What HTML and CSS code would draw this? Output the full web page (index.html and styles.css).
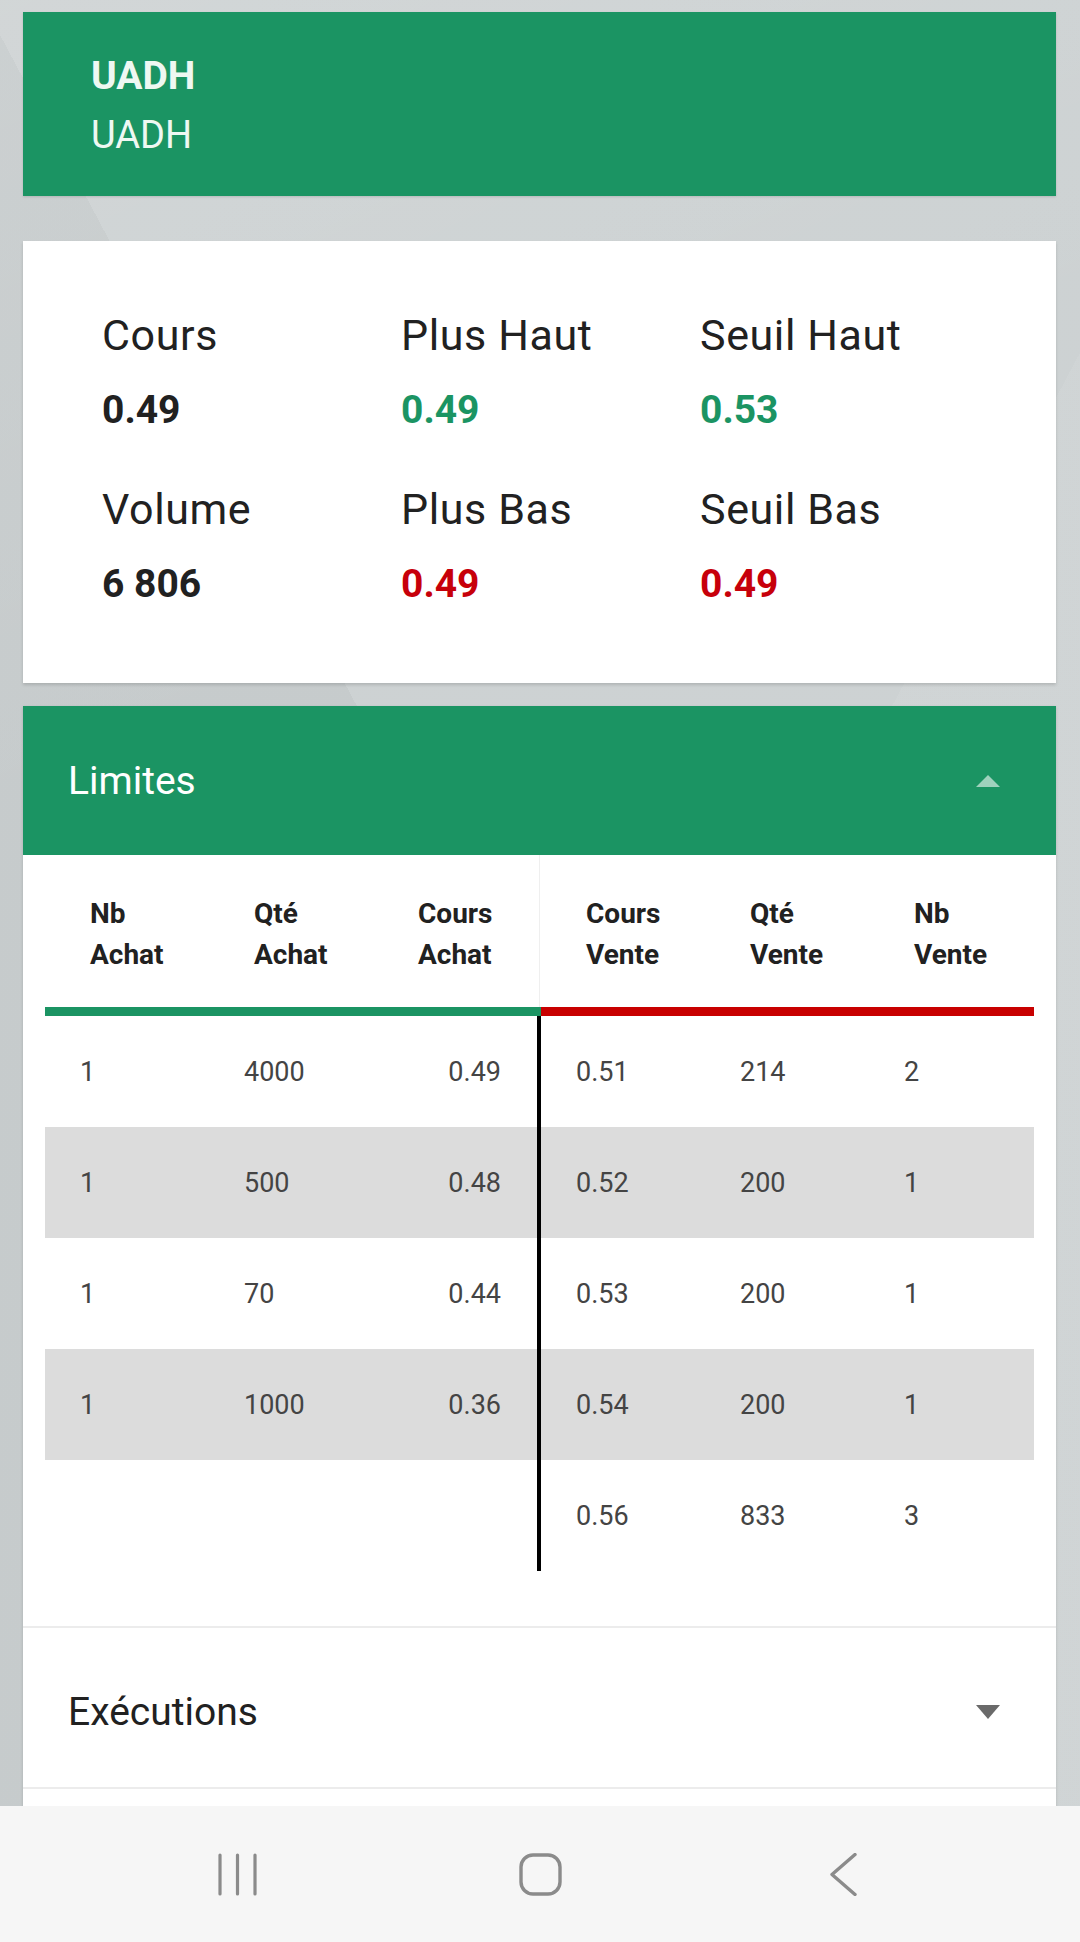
FILE: index.html
```html
<!DOCTYPE html>
<html lang="fr">
<head>
<meta charset="utf-8">
<title>UADH</title>
<link rel="stylesheet" href="styles.css">
</head>
<body>
<div class="screen">
  <main class="content">
    <section class="title-card">
      <div class="title">UADH</div>
      <div class="subtitle">UADH</div>
    </section>

    <section class="stats-card">
      <div class="stats-grid">
        <div class="stat"><div class="stat-label">Cours</div><div class="stat-value">0.49</div></div>
        <div class="stat"><div class="stat-label">Plus Haut</div><div class="stat-value up">0.49</div></div>
        <div class="stat"><div class="stat-label">Seuil Haut</div><div class="stat-value up">0.53</div></div>
        <div class="stat"><div class="stat-label">Volume</div><div class="stat-value">6 806</div></div>
        <div class="stat"><div class="stat-label">Plus Bas</div><div class="stat-value down">0.49</div></div>
        <div class="stat"><div class="stat-label">Seuil Bas</div><div class="stat-value down">0.49</div></div>
      </div>
    </section>

    <section class="panel">
      <div class="panel-head panel-head--open">
        <span class="panel-title">Limites</span>
        <span class="caret caret--up"></span>
      </div>

      <div class="book">
        <div class="book-head">
          <div class="th">Nb<br>Achat</div>
          <div class="th">Qté<br>Achat</div>
          <div class="th">Cours<br>Achat</div>
          <div class="th-divider"></div>
          <div class="th">Cours<br>Vente</div>
          <div class="th">Qté<br>Vente</div>
          <div class="th">Nb<br>Vente</div>
        </div>
        <div class="book-bar"><div class="bar-buy"></div><div class="bar-sell"></div></div>

        <div class="book-row">
          <div class="td">1</div><div class="td">4000</div><div class="td td--end">0.49</div>
          <div class="vline"></div>
          <div class="td">0.51</div><div class="td">214</div><div class="td">2</div>
        </div>
        <div class="book-row book-row--alt">
          <div class="td">1</div><div class="td">500</div><div class="td td--end">0.48</div>
          <div class="vline"></div>
          <div class="td">0.52</div><div class="td">200</div><div class="td">1</div>
        </div>
        <div class="book-row">
          <div class="td">1</div><div class="td">70</div><div class="td td--end">0.44</div>
          <div class="vline"></div>
          <div class="td">0.53</div><div class="td">200</div><div class="td">1</div>
        </div>
        <div class="book-row book-row--alt">
          <div class="td">1</div><div class="td">1000</div><div class="td td--end">0.36</div>
          <div class="vline"></div>
          <div class="td">0.54</div><div class="td">200</div><div class="td">1</div>
        </div>
        <div class="book-row">
          <div class="td"></div><div class="td"></div><div class="td td--end"></div>
          <div class="vline"></div>
          <div class="td">0.56</div><div class="td">833</div><div class="td">3</div>
        </div>
      </div>

      <div class="panel-sep"></div>
      <div class="panel-head panel-head--closed">
        <span class="panel-title">Exécutions</span>
        <span class="caret caret--down"></span>
      </div>
      <div class="panel-sep"></div>
      <div class="panel-rest"></div>
    </section>
  </main>

  <nav class="navbar">
    <svg class="nav-icon" width="43" height="43" viewBox="0 0 43 43">
      <path d="M4 2v39M21.5 2v39M39 2v39" fill="none" stroke="#8b8b8b" stroke-width="3.2" stroke-linecap="round"/>
    </svg>
    <svg class="nav-icon" width="43" height="43" viewBox="0 0 43 43">
      <rect x="2" y="2" width="39" height="39" rx="12" ry="12" fill="none" stroke="#8b8b8b" stroke-width="3.4"/>
    </svg>
    <svg class="nav-icon" width="43" height="43" viewBox="0 0 43 43">
      <path d="M33 1.5L10 21.5L33 41.5" fill="none" stroke="#8b8b8b" stroke-width="3.4" stroke-linecap="round" stroke-linejoin="round"/>
    </svg>
  </nav>
</div>
</body>
</html>
```

FILE: styles.css
```css
* {
  box-sizing: border-box;
}

html, body {
  margin: 0;
  padding: 0;
}

body {
  font-family: Roboto, "Noto Sans", "Liberation Sans", sans-serif;
  color: #212121;
  background-color: #cbd0d1;
}

.screen {
  width: 1080px;
  height: 1942px;
  display: flex;
  flex-direction: column;
  overflow: hidden;
  background-color: #cbd0d1;
  background-image:
    linear-gradient(155deg, rgba(255, 255, 255, 0.10) 0%, rgba(255, 255, 255, 0) 35%),
    linear-gradient(62deg, rgba(0, 0, 0, 0.025) 0 48%, rgba(255, 255, 255, 0.04) 48% 100%),
    linear-gradient(118deg, rgba(255, 255, 255, 0) 0 60%, rgba(255, 255, 255, 0.06) 60% 100%);
}

.content {
  height: 1806px;
  flex-shrink: 0;
  overflow: hidden;
  padding: 12px 24px 0 23px;
  display: flex;
  flex-direction: column;
}

.content > section {
  flex-shrink: 0;
}

/* Title card */
.title-card {
  background: #1b9463;
  padding: 41px 68px 37px;
  height: 184px;
  color: #eef8f2;
  box-shadow: 0 1px 2px rgba(0, 0, 0, 0.12);
}

.title {
  font-size: 39px;
  font-weight: 700;
  line-height: 46px;
}

.subtitle {
  margin-top: 13px;
  font-size: 38px;
  font-weight: 400;
  line-height: 46px;
}

/* Stats card */
.stats-card {
  margin-top: 45px;
  background: #ffffff;
  padding: 70px 0 75px 79px;
  box-shadow: 0 2px 3px rgba(0, 0, 0, 0.14);
}

.stats-grid {
  display: grid;
  grid-template-columns: repeat(3, 299px);
  row-gap: 51px;
}

.stat-label {
  font-size: 43px;
  letter-spacing: 0.6px;
  line-height: 48px;
  color: #212121;
  margin-bottom: 27px;
}

.stat-value {
  font-size: 39px;
  line-height: 48px;
  font-weight: 700;
  color: #212121;
}

.stat-value.up {
  color: #1b9463;
}

.stat-value.down {
  color: #c7000a;
}

/* Panel */
.panel {
  margin-top: 23px;
  background: #ffffff;
  box-shadow: 0 1px 3px rgba(0, 0, 0, 0.14);
}

.panel-head {
  display: flex;
  align-items: center;
  justify-content: space-between;
  padding: 0 56px 0 45px;
  font-size: 39px;
}

.panel-head--open {
  height: 149px;
  background: #1b9463;
  color: #ffffff;
}

.panel-head--closed {
  height: 159px;
  padding-top: 8px;
  color: #212121;
}

.caret {
  width: 0;
  height: 0;
  border-left: 12px solid transparent;
  border-right: 12px solid transparent;
}

.caret--up {
  border-bottom: 12px solid rgba(255, 255, 255, 0.58);
}

.caret--down {
  border-top: 14px solid #6a6a6a;
}

/* Order book */
.book {
  padding: 0 22px 55px;
}

.book-head,
.book-row {
  display: grid;
  grid-template-columns: 164px 164px 164px 4px 164px 164px 164px;
}

.book-head {
  height: 152px;
}

.th {
  padding: 38px 0 0 45px;
  font-size: 28px;
  line-height: 41px;
  font-weight: 700;
  color: #212121;
}

.th-divider {
  width: 1px;
  justify-self: center;
  background: #efefef;
}

.book-bar {
  display: flex;
  height: 9px;
}

.bar-buy {
  width: 496px;
  background: #1b9463;
}

.bar-sell {
  flex: 1;
  background: #c80000;
}

.book-row {
  height: 111px;
  align-items: center;
}

.book-row--alt {
  background: #dcdcdc;
}

.td {
  padding-left: 35px;
  font-size: 27px;
  color: #444444;
}

.td--end {
  padding-left: 0;
  padding-right: 36px;
  text-align: right;
}

.vline {
  align-self: stretch;
  background: #000000;
}

.panel-sep {
  height: 2px;
  background: #ececec;
}

.panel-rest {
  height: 40px;
}

/* Navigation bar */
.navbar {
  height: 136px;
  flex-shrink: 0;
  background: #f6f6f6;
  display: flex;
  align-items: center;
  justify-content: center;
  gap: 260px;
}

.nav-icon {
  display: block;
}
```
